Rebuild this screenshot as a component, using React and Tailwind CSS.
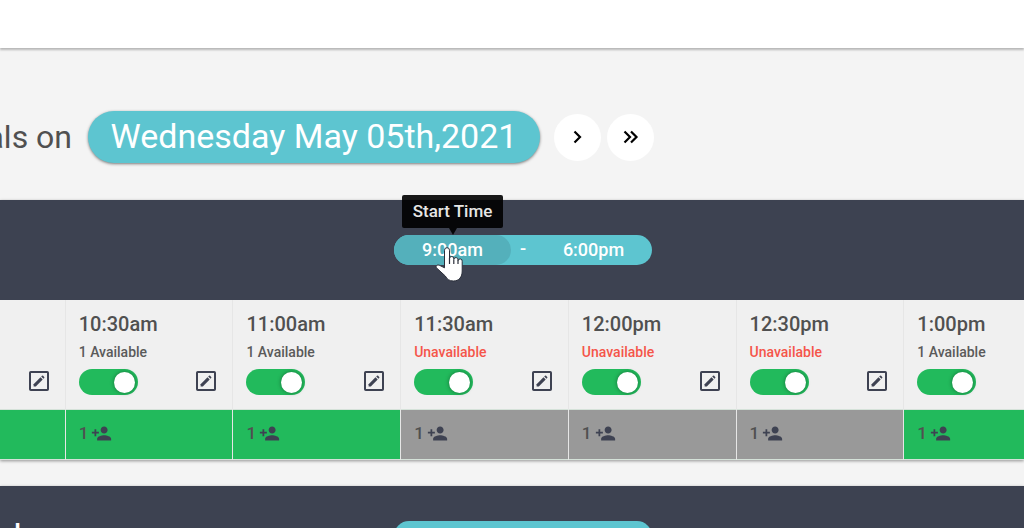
import React, { useState } from 'react';
import { MdPersonAdd } from 'react-icons/md';

const slots = [
  { time: '10:00am', available: 1 },
  { time: '10:30am', available: 1 },
  { time: '11:00am', available: 1 },
  { time: '11:30am', available: 0 },
  { time: '12:00pm', available: 0 },
  { time: '12:30pm', available: 0 },
  { time: '1:00pm', available: 1 },
];

function EditIcon() {
  return (
    <svg viewBox="0 0 20 20" className="h-5 w-5" aria-hidden="true">
      <rect x="1" y="1" width="18" height="18" rx="0.8" fill="none" stroke="#3e4252" strokeWidth="2" />
      <path d="M4.600 15.400v-2.200l6.900-6.900 2.200 2.200-6.900 6.900z" fill="#3e4252" />
      <path d="M12.200 5.600l.8-.8a.8.8 0 0 1 1.100 0l1.100 1.100a.8.8 0 0 1 0 1.100l-.8.8z" fill="#3e4252" />
    </svg>
  );
}

function Chevrons({ double }) {
  return (
    <svg viewBox="0 0 20 20" className="h-5 w-5" fill="none" stroke="#000" strokeWidth="2.2" aria-hidden="true">
      {double ? (
        <path d="M3.500 4.500l5.500 5.500-5.500 5.500M10 4.500l5.500 5.500-5.500 5.500" />
      ) : (
        <path d="M6.500 4.500l5.500 5.500-5.500 5.500" />
      )}
    </svg>
  );
}

function HandCursor() {
  return (
    <svg viewBox="0 0 28 35" className="pointer-events-none absolute top-3 left-[41px] z-20 h-[35px] w-7" aria-hidden="true">
      <path
        d="M9.500 3.200a2.500 2.500 0 0 1 5 0V11.500a2 2 0 0 1 4.300.3v.6a2 2 0 0 1 4.200.6v.8a2 2 0 0 1 4.200.5V24c0 6-3.200 10-8.700 10-4.500 0-6.500-2-8.200-5L1.300 20.700c-.8-1.700.8-3.300 2.800-2.600l5.400 2.700z"
        fill="#fff"
        stroke="#2b2f3a"
        strokeWidth="1"
      />
      <path d="M14.500 11v6M18.800 12.500v4.500M23 13.500v3.500" stroke="#2b2f3a" strokeWidth="1.200" fill="none" />
    </svg>
  );
}

function TimeRange({ start, end, hovered }) {
  return (
    <div className="relative flex h-[30px] w-[258px] rounded-full bg-[#5dc5d0] text-lg font-medium text-white">
      <button className={`h-full w-[117px] rounded-full ${hovered ? 'bg-[#54b0bb]' : ''}`}>{start}</button>
      <span className="w-6 text-center leading-7">-</span>
      <button className="h-full flex-1 rounded-full">{end}</button>
      {hovered && (
        <>
          <div role="tooltip" className="absolute bottom-[37px] left-2 z-10 h-[33px] w-[101px] rounded-xs bg-black/90 text-center text-[17px] leading-8 text-[#e6e6e6]">
            Start Time
            <span className="absolute top-full left-1/2 -ml-1 border-x-4 border-t-[7px] border-x-transparent border-t-black/90" />
          </div>
          <HandCursor />
        </>
      )}
    </div>
  );
}

/* Time slot column: status on top, booking count below */
function Slot({ time, available }) {
  const [open, setOpen] = useState(true);

  return (
    <div className="border-l border-[#e6e6e6]">
      <div className="h-[109px] bg-[#f0f0f0] pt-[10px] pr-4 pl-[13px]">
        <div className="text-xl leading-7 font-medium text-[#505050]">{time}</div>
        {available > 0 ? (
          <div className="text-sm leading-7 font-medium text-[#5a5a5a]">{available} Available</div>
        ) : (
          <div className="text-sm leading-7 font-medium text-[#f5554a]">Unavailable</div>
        )}
        <div className="mt-[3px] flex justify-between">
          <label className="relative block h-[26px] w-[59px]">
            <input
              type="checkbox"
              aria-label={`Open ${time}`}
              checked={open}
              onChange={(e) => setOpen(e.target.checked)}
              className="peer block h-full w-full appearance-none rounded-full bg-gray-400 checked:bg-[#22ba5c]"
            />
            <span className="pointer-events-none absolute top-[3px] left-[3px] h-[21px] w-[21px] rounded-full bg-white shadow-[0_0_4px_rgba(0,0,0,0.4)] peer-checked:left-[35px]" />
          </label>
          <button className="mt-[2px] h-5" aria-label={`Edit ${time}`}>
            <EditIcon />
          </button>
        </div>
      </div>
      <div className={`flex h-[51px] items-center gap-[3px] border-y border-[#d5e2d9] px-[13px] pb-[2px] ${available > 0 ? 'bg-[#22ba5c]' : 'bg-[#999999]'}`}>
        <span className="text-[17px] font-medium text-[#505050]">1</span>
        <MdPersonAdd size={21} color="#3e4252" />
      </div>
    </div>
  );
}

export default function App() {
  return (
    <div className="h-screen overflow-hidden bg-[#f4f4f4] font-['Roboto',sans-serif]">
      <header className="h-12 bg-white shadow-[0_2px_2px_rgba(0,0,0,0.25)]" />

      <div className="flex h-[152px] items-center pt-[26px]">
        <div className="flex w-[72px] justify-end whitespace-nowrap text-[32px] text-[#505050]">
          <h1>Rentals on</h1>
        </div>
        <button className="ml-4 h-[52px] w-[452px] rounded-full bg-[#5dc5d0] pb-[2px] text-[34px] leading-[50px] text-white shadow-[0_1px_3px_rgba(0,0,0,0.5)]">
          Wednesday May 05th,2021
        </button>
        <button aria-label="Next day" className="ml-[14px] flex h-[47px] w-[47px] items-center justify-center rounded-full bg-white">
          <Chevrons />
        </button>
        <button aria-label="Next week" className="ml-[6px] flex h-[47px] w-[47px] items-center justify-center rounded-full bg-white">
          <Chevrons double />
        </button>
      </div>

      <section className="shadow-[0_1px_3px_rgba(0,0,0,0.4)]">
        <div className="flex h-[100px] justify-center bg-[#3d4251] pt-[35px] pl-[22px]">
          <TimeRange start="9:00am" end="6:00pm" hovered />
        </div>
        <div className="overflow-hidden">
          <div className="-mr-[47px] -ml-[103px] grid grid-cols-7">
            {slots.map((slot) => (
              <Slot key={slot.time} {...slot} />
            ))}
          </div>
        </div>
      </section>

      <section className="mt-[26px] grid h-[100px] grid-cols-[1fr_auto_1fr] bg-[#3d4251] pt-[35px] pl-[22px] shadow-[0_1px_3px_rgba(0,0,0,0.4)]">
        <h2 className="-ml-2 text-[28px] leading-7 font-medium text-white">l</h2>
        <TimeRange start="9:00am" end="6:00pm" />
      </section>
    </div>
  );
}
